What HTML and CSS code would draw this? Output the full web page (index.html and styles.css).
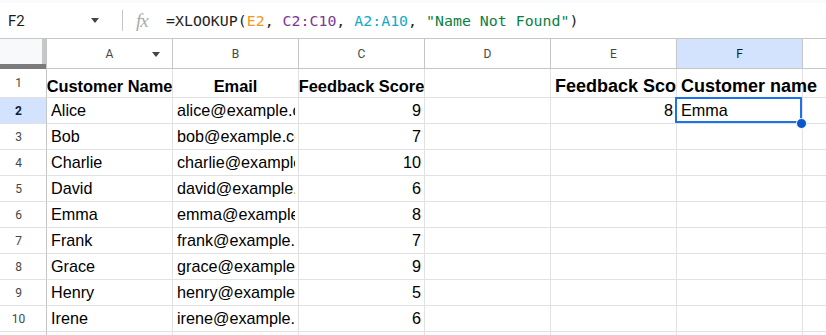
FILE: index.html
```html
<!DOCTYPE html>
<html lang="en">
<head>
  <meta charset="UTF-8" />
  <title>Feedback Sheet</title>
  <link rel="stylesheet" href="styles.css">
</head>
<body>

  <div class="formula-bar">
    <div class="name-box">
      <span>F2</span>
      <span class="caret"></span>
    </div>
    <div class="divider"></div>
    <div class="fx">fx</div>
    <div class="formula">=XLOOKUP(<span class="ref-e">E2</span>, <span class="ref-c">C2:C10</span>, <span class="ref-a">A2:A10</span>, <span class="str">"Name Not Found"</span>)</div>
  </div>

  <div class="sheet">
    <div class="row head-row">
      <div class="corner"></div>
      <div class="ch">A<span class="caret filter"></span></div>
      <div class="ch">B</div>
      <div class="ch">C</div>
      <div class="ch">D</div>
      <div class="ch">E</div>
      <div class="ch active">F</div>
      <div class="ch"></div>
    </div>

    <div class="row first-row">
      <div class="rh">1</div>
      <div class="cell b center">Customer Name</div>
      <div class="cell b center">Email</div>
      <div class="cell b center">Feedback Score</div>
      <div class="cell"></div>
      <div class="cell b big">Feedback Score</div>
      <div class="cell b big spill">Customer name</div>
      <div class="cell"></div>
    </div>

    <div class="row">
      <div class="rh active">2</div>
      <div class="cell">Alice</div>
      <div class="cell">alice@example.com</div>
      <div class="cell num">9</div>
      <div class="cell"></div>
      <div class="cell num">8</div>
      <div class="cell sel">Emma</div>
      <div class="cell"></div>
    </div>

    <div class="row">
      <div class="rh">3</div>
      <div class="cell">Bob</div>
      <div class="cell">bob@example.com</div>
      <div class="cell num">7</div>
      <div class="cell"></div><div class="cell"></div><div class="cell"></div><div class="cell"></div>
    </div>

    <div class="row">
      <div class="rh">4</div>
      <div class="cell">Charlie</div>
      <div class="cell">charlie@example.com</div>
      <div class="cell num">10</div>
      <div class="cell"></div><div class="cell"></div><div class="cell"></div><div class="cell"></div>
    </div>

    <div class="row">
      <div class="rh">5</div>
      <div class="cell">David</div>
      <div class="cell">david@example.com</div>
      <div class="cell num">6</div>
      <div class="cell"></div><div class="cell"></div><div class="cell"></div><div class="cell"></div>
    </div>

    <div class="row">
      <div class="rh">6</div>
      <div class="cell">Emma</div>
      <div class="cell">emma@example.com</div>
      <div class="cell num">8</div>
      <div class="cell"></div><div class="cell"></div><div class="cell"></div><div class="cell"></div>
    </div>

    <div class="row">
      <div class="rh">7</div>
      <div class="cell">Frank</div>
      <div class="cell">frank@example.com</div>
      <div class="cell num">7</div>
      <div class="cell"></div><div class="cell"></div><div class="cell"></div><div class="cell"></div>
    </div>

    <div class="row">
      <div class="rh">8</div>
      <div class="cell">Grace</div>
      <div class="cell">grace@example.com</div>
      <div class="cell num">9</div>
      <div class="cell"></div><div class="cell"></div><div class="cell"></div><div class="cell"></div>
    </div>

    <div class="row">
      <div class="rh">9</div>
      <div class="cell">Henry</div>
      <div class="cell">henry@example.com</div>
      <div class="cell num">5</div>
      <div class="cell"></div><div class="cell"></div><div class="cell"></div><div class="cell"></div>
    </div>

    <div class="row">
      <div class="rh">10</div>
      <div class="cell">Irene</div>
      <div class="cell">irene@example.com</div>
      <div class="cell num">6</div>
      <div class="cell"></div><div class="cell"></div><div class="cell"></div><div class="cell"></div>
    </div>

    <div class="row">
      <div class="rh">11</div>
      <div class="cell"></div><div class="cell"></div><div class="cell"></div><div class="cell"></div>
      <div class="cell"></div><div class="cell"></div><div class="cell"></div>
    </div>
  </div>

</body>
</html>
```

FILE: styles.css
```css
html, body {
  margin: 0;
  height: 335px;
  overflow: hidden;
  background: #f9fbfd;
  font-family: Roboto, "Liberation Sans", Arial, sans-serif;
  color: #1f1f1f;
}

/* formula bar */
.formula-bar {
  margin-top: 3px;
  height: 35px;
  background: white;
  border-bottom: 1px solid #c4c7c5;
  display: flex;
  align-items: center;
}
.name-box {
  width: 115px;
  padding-left: 8px;
  box-sizing: border-box;
  display: flex;
  align-items: center;
  justify-content: space-between;
  padding-right: 16px;
  font-size: 15px;
}
.caret {
  width: 0;
  height: 0;
  border-left: 4.5px solid transparent;
  border-right: 4.5px solid transparent;
  border-top: 5px solid #444746;
}
.divider {
  width: 1px;
  height: 21px;
  background: #c4c7c5;
  margin-left: 7px;
}
.fx {
  margin-left: 13px;
  width: 17px;
  font-family: "Liberation Serif", serif;
  font-style: italic;
  font-size: 19px;
  color: #a8abae;
  letter-spacing: -1px;
}
.formula {
  margin-left: 13px;
  font-family: "DejaVu Sans Mono", "Liberation Mono", monospace;
  font-size: 14.9px;
  white-space: nowrap;
  color: #1f1f1f;
}
.ref-e { color: #f7981d; }
.ref-c { color: #7e3794; }
.ref-a { color: #11a9cc; }
.str { color: #0b8043; }

/* grid */
.sheet {
  background: white;
  width: 826px;
  overflow: hidden;
}
.row {
  display: grid;
  grid-template-columns: 47px repeat(7, 126px);
  height: 26px;
}
.head-row { height: 30px; }
.first-row { height: 29px; }

.corner {
  background: #f8f9fa;
  box-shadow: inset 0 -5px #7b7b7b, inset -4px 0 #c7c7c7;
  border-right: 1px solid #c4c7c5;
}
.ch {
  border-right: 1px solid #c4c7c5;
  border-bottom: 1px solid #c4c7c5;
  font-size: 12px;
  color: #444746;
  display: flex;
  align-items: center;
  justify-content: center;
  position: relative;
}
.ch.active {
  background: #d3e3fd;
  color: #0b1c3a;
}
.filter {
  position: absolute;
  right: 12px;
  top: 13px;
}
.rh {
  border-right: 1px solid #c4c7c5;
  border-bottom: 1px solid #e1e1e1;
  font-size: 12px;
  color: #444746;
  display: flex;
  align-items: center;
  justify-content: center;
  padding-right: 9px;
}
.rh.active {
  background: #d3e3fd;
  color: #0b1c3a;
  font-weight: bold;
}

.cell {
  border-right: 1px solid #e1e1e1;
  border-bottom: 1px solid #e1e1e1;
  font-family: "Liberation Sans", Arial, sans-serif;
  font-size: 16.2px;
  line-height: 21px;
  color: #000;
  padding: 0 3px 2px 4px;
  white-space: nowrap;
  overflow: clip;
  overflow-clip-margin: content-box;
  display: flex;
  align-items: flex-end;
}
.first-row .cell { padding-bottom: 0; overflow: hidden; }
.cell.b { font-weight: bold; font-size: 16.4px; }
.cell.big { font-size: 18px; }
.first-row .cell.spill { overflow: visible; }
.cell.center { justify-content: center; padding: 0; }
.cell.num { justify-content: flex-end; }

.cell.sel {
  position: relative;
  overflow: visible;
}
.cell.sel::before {
  content: "";
  position: absolute;
  left: -2px;
  top: -1px;
  right: 0;
  bottom: 0;
  border: 2px solid #1a73e8;
}
.cell.sel::after {
  content: "";
  position: absolute;
  right: -5px;
  bottom: -6px;
  width: 9px;
  height: 9px;
  border-radius: 50%;
  background: #0b57d0;
  border: 1px solid white;
}
```
